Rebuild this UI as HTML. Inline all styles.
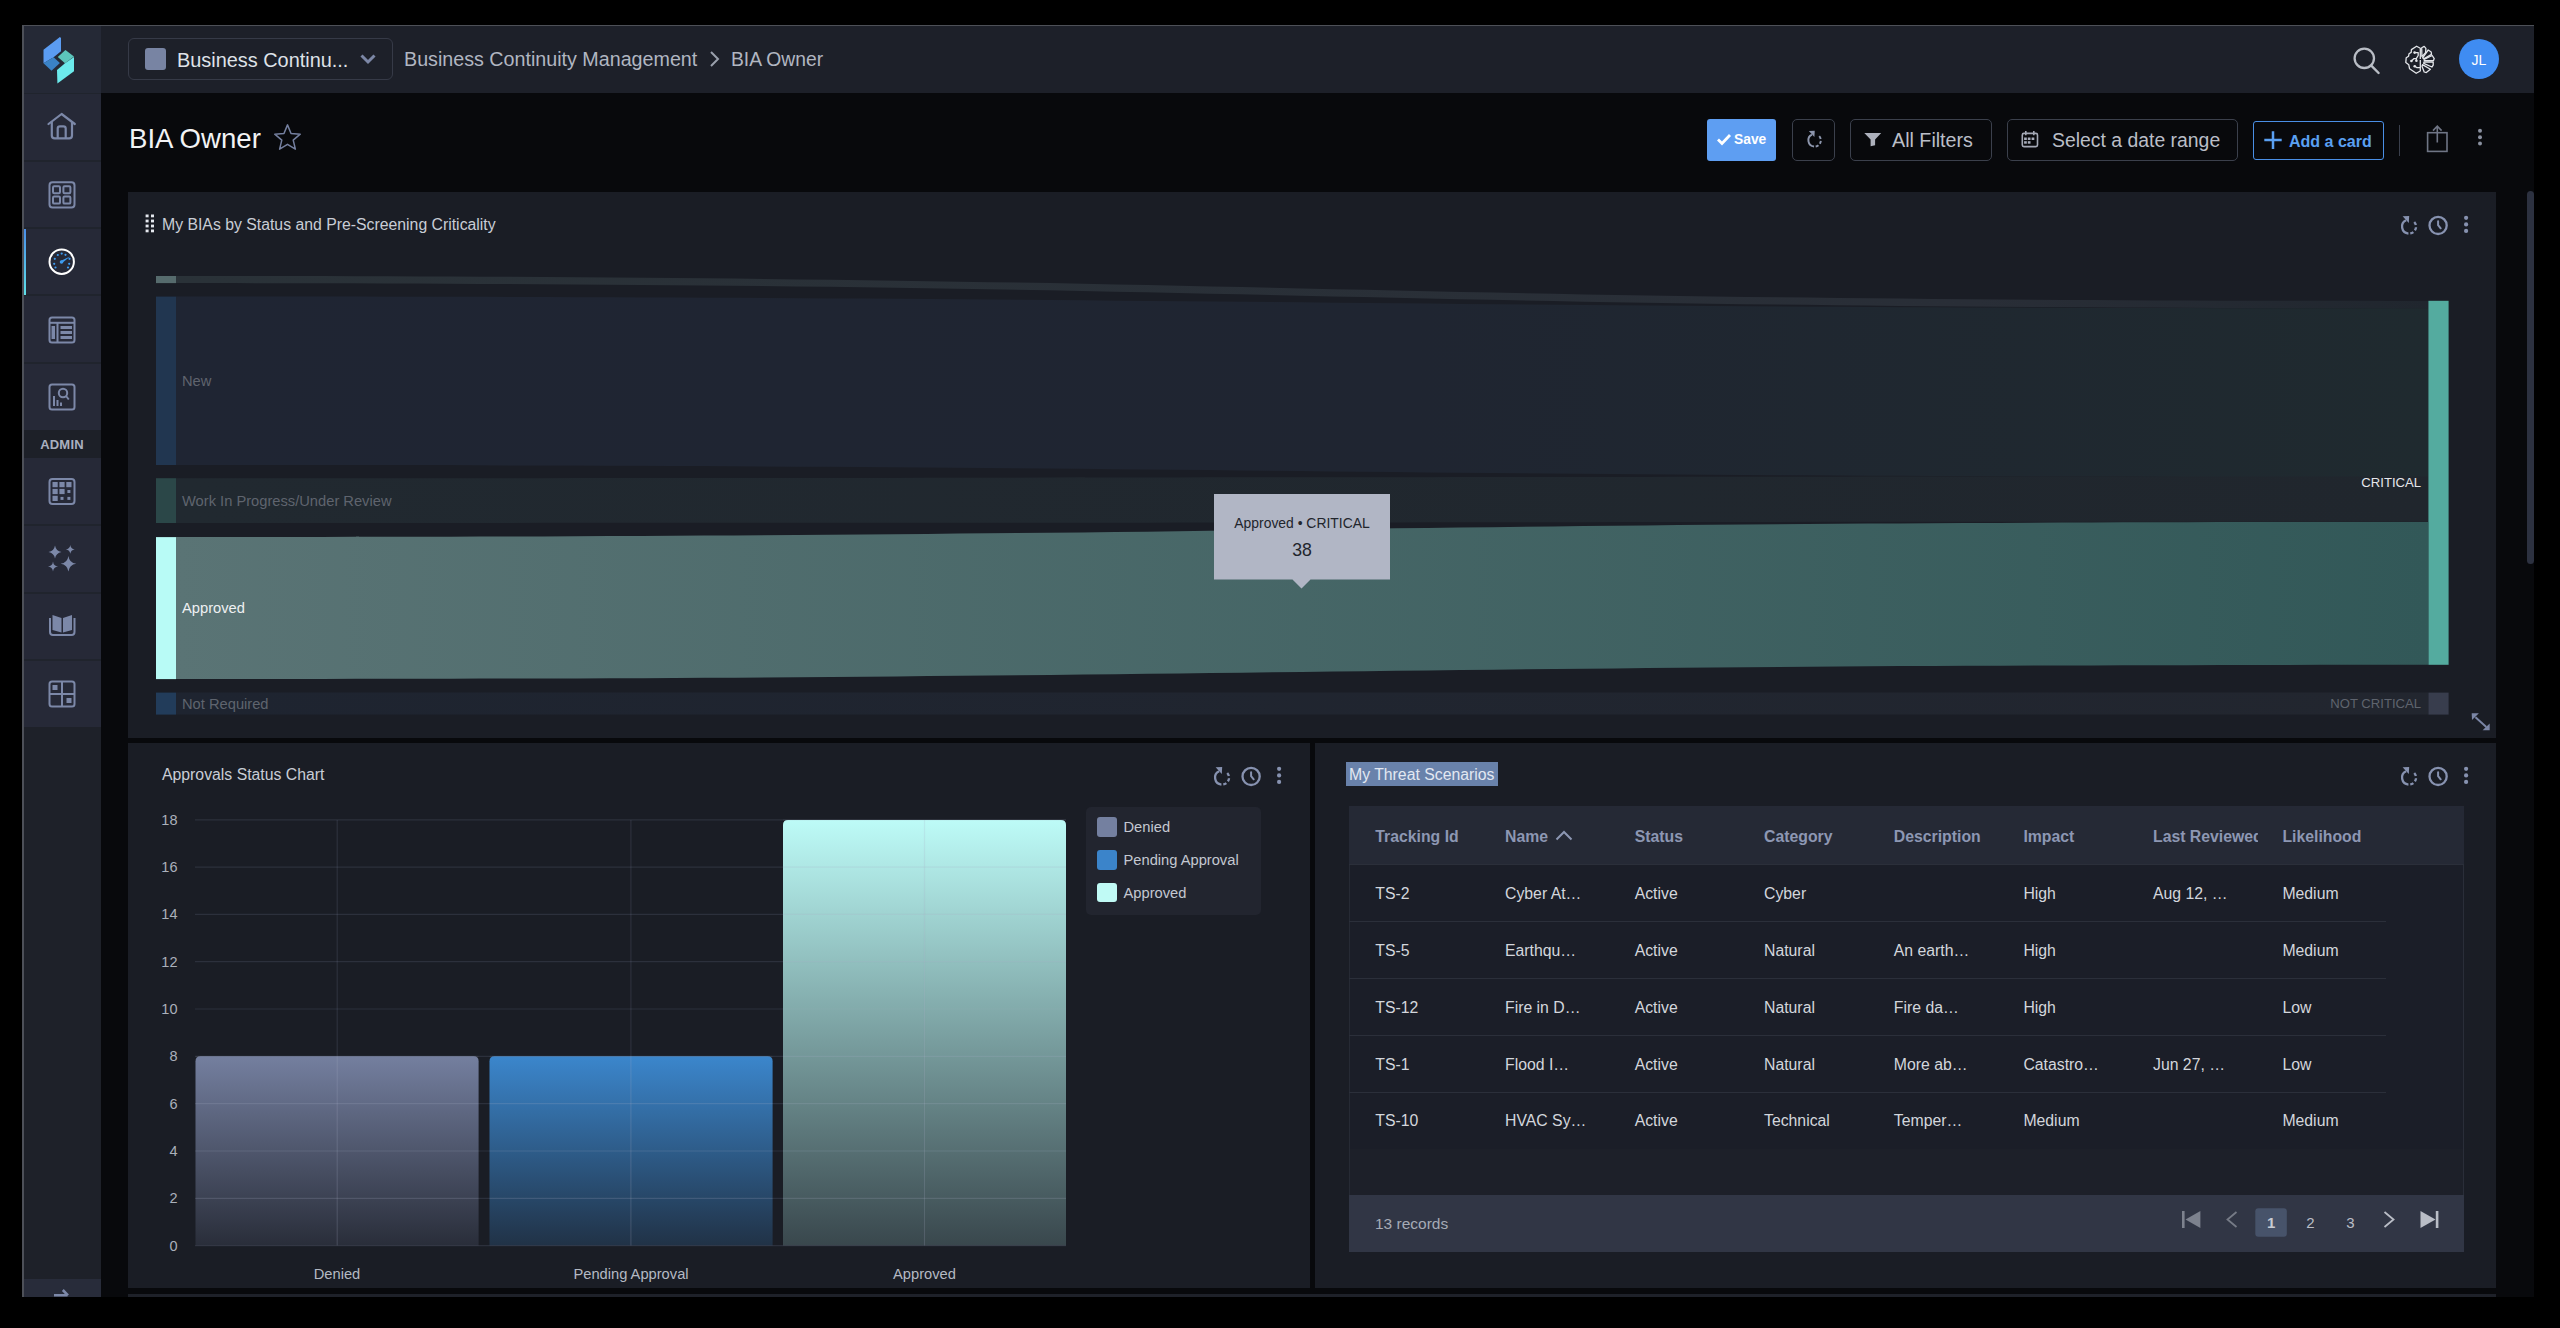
<!DOCTYPE html>
<html><head><meta charset="utf-8">
<style>
*{box-sizing:border-box;margin:0;padding:0}
html,body{width:2560px;height:1328px;overflow:hidden;background:#000;font-family:"Liberation Sans",sans-serif}
.a{position:absolute}
.t{position:absolute;white-space:nowrap;line-height:1}
#win{left:22px;top:25px;width:2512px;height:1272px;background:#08090c;overflow:hidden}
#wbt{left:22px;top:25px;width:2512px;height:1px;background:#4d5057}
#wbl{left:22px;top:25px;width:2px;height:1272px;background:#4d5058}
.sb{left:23px;width:78px;background:#262937}
.sep{left:23px;width:78px;height:2px;background:#20242d}
.ic{position:absolute}
.panel{background:#1a1d25}
</style></head><body>
<div id="win" class="a"></div>
<!-- sidebar -->
<div class="a sb" style="top:26px;height:67px;background:#252936"></div>
<div class="a" style="left:23px;top:92.8px;width:78px;height:1.5px;background:#20242d"></div>
<div class="a sb" style="top:94.3px;height:632.7px"></div>
<div class="a" style="left:23px;top:727px;width:78px;height:552px;background:#1e2129"></div>
<div class="a" style="left:23px;top:1279px;width:78px;height:18px;background:#282c3a"></div>
<div class="a sep" style="top:160px"></div>
<div class="a sep" style="top:227px"></div>
<div class="a sep" style="top:294px"></div>
<div class="a sep" style="top:362px"></div>
<div class="a" style="left:23px;top:430px;width:78px;height:28px;background:#1d2028"></div>
<div class="t" style="left:23px;width:78px;top:438px;text-align:center;font-size:13px;font-weight:bold;color:#aab0c0;letter-spacing:0.2px">ADMIN</div>
<div class="a sep" style="top:524px"></div>
<div class="a sep" style="top:592px"></div>
<div class="a sep" style="top:659px"></div>
<div class="a" style="left:22px;top:229px;width:4px;height:66px;background:linear-gradient(#4a8fe8,#5ee0e8)"></div>
<div id="wbt" class="a"></div>
<div id="wbl" class="a"></div>
<!-- logo -->
<svg class="ic" style="left:40px;top:34px" width="38" height="52" viewBox="40 34 38 52">
<polygon points="43.5,49.7 59.9,37.1 61,38 61,51.2 53.6,57.3 43.5,63.2" fill="#5b9cf2"/>
<polygon points="43.5,63.2 53.6,57.3 59.9,63 51.5,70.8" fill="#3a82c6"/>
<polygon points="57.8,56.9 65.4,50.1 74,56.5 65,63.2" fill="#5cc5bb"/>
<polygon points="57,70 65,63.2 74,56.9 74,71.2 57.4,83.5" fill="#6ceaec"/>
</svg>
<!-- sidebar icons -->
<svg class="ic" style="left:45px;top:110px" width="34" height="32" viewBox="45 110 34 32" fill="none" stroke="#7c88a8" stroke-width="2.2" stroke-linejoin="round" stroke-linecap="round">
<path d="M48.5,124 L61.6,114 L74.8,124"/><path d="M51.8,122 V135.5 Q51.8,138.4 54.7,138.4 H69.2 Q72,138.4 72,135.5 V122"/><path d="M57.7,138 V128.5 Q57.7,126.3 60,126.3 H63.4 Q65.7,126.3 65.7,128.5 V138"/>
</svg>
<svg class="ic" style="left:45px;top:178px" width="34" height="34" viewBox="45 178 34 34" fill="none" stroke="#7c88a8" stroke-width="2">
<rect x="49.5" y="182.2" width="25" height="25.4" rx="3"/>
<rect x="53" y="186.3" width="7" height="7" rx="1.2"/><rect x="63.4" y="186.3" width="7" height="7" rx="1.2"/>
<rect x="53" y="196.6" width="7" height="7" rx="1.2"/><rect x="63.4" y="196.6" width="7" height="7" rx="1.2"/>
</svg>
<svg class="ic" style="left:45px;top:245px" width="34" height="34" viewBox="45 245 34 34">
<circle cx="61.7" cy="261.7" r="12.2" fill="none" stroke="#fff" stroke-width="2"/>
<g fill="#3e9bef">
<circle cx="54.2" cy="263.8" r="1.1"/><circle cx="54.8" cy="258.8" r="1.1"/><circle cx="57.8" cy="255" r="1.1"/><circle cx="61.7" cy="253.6" r="1.1"/><circle cx="65.5" cy="254.8" r="1.1"/><circle cx="69.2" cy="263.8" r="1.1"/><circle cx="69.5" cy="258.8" r="1.1"/><circle cx="55.5" cy="267.5" r="1.1"/><circle cx="68" cy="267.5" r="1.1"/>
<circle cx="61.5" cy="262" r="1.8"/>
<polygon points="60.5,261 62.2,263 70,256.5"/>
</g>
</svg>
<svg class="ic" style="left:45px;top:313px" width="34" height="34" viewBox="45 313 34 34" fill="none" stroke="#7c88a8" stroke-width="2">
<rect x="49.5" y="317.5" width="25" height="25" rx="2.5"/><path d="M49.5,322.8 H74.5"/><path d="M57.5,323 V342"/>
<g fill="#7c88a8" stroke="none"><rect x="51.5" y="326" width="3.5" height="13"/><rect x="60.5" y="326" width="11.5" height="3"/><rect x="60.5" y="331" width="11.5" height="3"/><rect x="60.5" y="336" width="11.5" height="3"/></g>
</svg>
<svg class="ic" style="left:45px;top:380px" width="34" height="34" viewBox="45 380 34 34" fill="none" stroke="#7c88a8" stroke-width="2">
<rect x="49.5" y="384.5" width="25" height="25" rx="2.5"/><circle cx="63" cy="393" r="4.2"/><path d="M66,396 L68.8,399.5"/>
<g fill="#7c88a8" stroke="none"><rect x="53" y="396" width="2" height="10"/><rect x="56.5" y="400" width="2" height="6"/><rect x="60" y="402.5" width="2" height="3.5"/></g>
</svg>
<svg class="ic" style="left:45px;top:475px" width="34" height="34" viewBox="45 475 34 34">
<rect x="49.5" y="479" width="25" height="25" rx="3" fill="none" stroke="#7c88a8" stroke-width="2"/>
<g fill="#7c88a8"><rect x="52.5" y="482" width="5.2" height="5.2"/><rect x="59.4" y="482" width="5.2" height="5.2"/><rect x="66.3" y="482" width="5.2" height="5.2"/>
<rect x="52.5" y="488.9" width="5.2" height="5.2"/><rect x="59.4" y="488.9" width="5.2" height="5.2"/><rect x="67.4" y="490" width="3" height="3"/>
<rect x="52.5" y="495.8" width="5.2" height="5.2"/><rect x="60.5" y="496.9" width="3" height="3"/><rect x="67.4" y="496.9" width="3" height="3"/></g>
</svg>
<svg class="ic" style="left:45px;top:543px" width="34" height="34" viewBox="45 543 34 34" fill="#7c88a8">
<path d="M55,545.5 Q56,551 61.5,552 Q56,553 55,558.5 Q54,553 48.5,552 Q54,551 55,545.5Z"/>
<path d="M70.3,545 Q70.8,548.9 74.7,549.4 Q70.8,549.9 70.3,553.8 Q69.8,549.9 65.9,549.4 Q69.8,548.9 70.3,545Z"/>
<path d="M68.4,556 Q69.3,562.9 76.2,563.8 Q69.3,564.7 68.4,571.6 Q67.5,564.7 60.6,563.8 Q67.5,562.9 68.4,556Z"/>
<path d="M53,561.6 Q53.5,566.1 58,566.6 Q53.5,567.1 53,571.6 Q52.5,567.1 48,566.6 Q52.5,566.1 53,561.6Z"/>
</svg>
<svg class="ic" style="left:45px;top:608px" width="34" height="34" viewBox="45 608 34 34">
<path d="M50,618 V632 Q50,635 53,635 H71.5 Q74.5,635 74.5,632 V618" fill="none" stroke="#7c88a8" stroke-width="2"/>
<path d="M52.5,615 L61.5,618 V632.5 L52.5,630Z" fill="#7c88a8"/><path d="M72,615 L63,618 V632.5 L72,630Z" fill="#7c88a8"/>
</svg>
<svg class="ic" style="left:45px;top:677px" width="34" height="34" viewBox="45 677 34 34" fill="none" stroke="#7c88a8" stroke-width="2">
<rect x="49.5" y="681.5" width="25" height="25" rx="2.5"/><path d="M62,681.5 V706.5 M49.5,694 H74.5"/>
<g fill="#7c88a8" stroke="none"><rect x="52.5" y="685" width="5" height="5"/><rect x="66.5" y="698" width="5" height="5"/></g>
</svg>
<svg class="ic" style="left:52px;top:1286px" width="20" height="11" viewBox="52 1286 20 11">
<path d="M54,1295.3 H67.5 M62.8,1290 L68,1295.3" fill="none" stroke="#7c88a8" stroke-width="2.6"/>
</svg>

<!-- header -->
<div class="a" style="left:101px;top:26px;width:2433px;height:67px;background:#1d2029"></div>
<div class="a" style="left:128px;top:38px;width:265px;height:42px;border:1px solid #363a47;border-radius:6px"></div>
<div class="a" style="left:145px;top:48px;width:21px;height:22px;background:#7884a3;border-radius:3px"></div>
<div class="t" id="dd" style="left:177px;top:50.8px;font-size:19.9px;color:#dfe2e8">Business Continu...</div>
<svg class="ic" style="left:358px;top:51px" width="20" height="16" viewBox="0 0 20 16"><path d="M3.5,4.5 L10,11 L16.5,4.5" fill="none" stroke="#7c87a6" stroke-width="3"/></svg>
<div class="t" id="bc1" style="left:404px;top:50px;font-size:19.7px;color:#b1b6c1">Business Continuity Management</div>
<svg class="ic" style="left:706px;top:48px" width="16" height="22" viewBox="0 0 16 22"><path d="M5,4 L12,11 L5,18" fill="none" stroke="#9aa0ac" stroke-width="2"/></svg>
<div class="t" id="bc2" style="left:731px;top:50px;font-size:19.3px;color:#b1b6c1">BIA Owner</div>
<svg class="ic" style="left:2350px;top:44px" width="34" height="34" viewBox="2350 44 34 34"><circle cx="2364.3" cy="58.3" r="9.7" fill="none" stroke="#b9bdc5" stroke-width="2.3"/><path d="M2371.3,65.6 L2378.6,73" stroke="#b9bdc5" stroke-width="2.4" stroke-linecap="round"/></svg>
<svg class="ic" style="left:2402px;top:43px" width="36" height="34" viewBox="2402 43 36 34" fill="none" stroke="#e4e6ea" stroke-width="1.3" stroke-linejoin="round">
<path d="M2420.3,59 V48.3 L2416.6,46.2 L2411.4,49.6 L2411.2,52.4 L2409,53.8 L2408.6,56.2 L2406.2,57.8 L2405.8,62.6 L2408.8,64.8 L2409.6,68.8 L2416.2,73.3 L2420.3,71 V60"/>
<path d="M2414.6,52.6 H2418.2 V55.5 L2416.4,58.3 V60.8"/><path d="M2411.4,61 L2414,58.6 H2416.4"/><path d="M2414.7,66.2 L2417,67.6 H2420.3"/>
<g fill="#e4e6ea" stroke="none"><circle cx="2414.6" cy="52.6" r="1.3"/><circle cx="2411.4" cy="61" r="1.3"/><circle cx="2416.4" cy="60.8" r="1.3"/><circle cx="2414.7" cy="66.2" r="1.3"/></g>
<path d="M2421.9,56.6 L2421.7,47.8 L2424.2,46.4 L2425.9,48.4 L2425.6,52.6 Z"/>
<path d="M2422.6,57.8 L2428.2,50 L2431.2,52 L2431.5,54.4 L2424.3,58.6 Z"/>
<path d="M2424,59.4 L2432.2,55.5 L2434.2,58.6 L2433.5,60.5 L2424.3,60.6 Z"/>
<path d="M2424,61.8 L2433.2,62 L2433.2,65.2 L2431.9,67 L2423.7,63.4 Z"/>
<path d="M2422.5,64.6 L2430.4,69.2 L2426.3,72.6 L2424.2,72 L2422,66.2 Z"/>
</svg>
<div class="a" style="left:2459px;top:39px;width:40px;height:40px;border-radius:50%;background:#3f8cf2"></div>
<div class="t" style="left:2459px;width:40px;top:53px;text-align:center;font-size:14px;color:#fff">JL</div>

<!-- title row -->
<div class="t" id="title" style="left:129px;top:124.5px;font-size:27.6px;color:#f2f3f5">BIA Owner</div>
<svg class="ic" style="left:270px;top:120px" width="36" height="36" viewBox="270 120 36 36"><polygon points="287.50,124.90 291.03,133.45 300.24,134.16 293.21,140.15 295.38,149.14 287.50,144.30 279.62,149.14 281.79,140.15 274.76,134.16 283.97,133.45" fill="none" stroke="#7580a0" stroke-width="1.5" stroke-linejoin="round"/></svg>

<div class="a" style="left:1707px;top:119px;width:69px;height:42px;background:#5e9ef2;border-radius:3px"></div>
<svg class="ic" style="left:1716px;top:132px" width="16" height="14" viewBox="0 0 16 14"><path d="M2,7.5 L6,11.5 L14,3" fill="none" stroke="#fff" stroke-width="2.8"/></svg>
<div class="t" id="save" style="left:1734px;top:133px;font-size:13.8px;font-weight:bold;color:#fff">Save</div>

<div class="a" style="left:1792px;top:119px;width:43px;height:42px;border:1px solid #3b404c;border-radius:5px"></div>
<svg class="ic" style="left:1802px;top:128px" width="26" height="24" viewBox="1802 128 26 24"><g transform="translate(1814.6,140.3) scale(0.89) translate(-2409.05,-226.6)">
<path d="M2406.09,220.26 A7,7 0 0 0 2408.44,233.57" fill="none" stroke="#8d96ad" stroke-width="2.2"/>
<path d="M2410.27,233.49 A7,7 0 0 0 2412.55,220.54" fill="none" stroke="#8d96ad" stroke-width="2.2" stroke-dasharray="3.4 2.2"/>
<polygon points="2402.6,216.2 2409.2,216 2408.8,222.9" fill="#8d96ad"/></g></svg>

<div class="a" style="left:1850px;top:119px;width:142px;height:42px;border:1px solid #3b404c;border-radius:5px"></div>
<svg class="ic" style="left:1860px;top:128px" width="26" height="22" viewBox="1860 128 26 22"><path d="M1864.3,132.9 H1881.2 L1875.1,139.6 V145.3 L1870.6,146.2 V139.6Z" fill="#adb1bc"/></svg>
<div class="t" id="allf" style="left:1892px;top:131px;font-size:19.7px;color:#babec7">All Filters</div>

<div class="a" style="left:2007px;top:119px;width:231px;height:42px;border:1px solid #3b404c;border-radius:5px"></div>
<svg class="ic" style="left:2016px;top:126px" width="28" height="26" viewBox="2016 126 28 26"><rect x="2022.3" y="133.4" width="15.2" height="13.2" rx="1.6" fill="none" stroke="#a3a8b5" stroke-width="1.6"/><path d="M2025.8,131 V135.2 M2033.8,131 V135.2" stroke="#a3a8b5" stroke-width="1.6"/><g fill="#a8adbb"><rect x="2024.1" y="137.5" width="2.7" height="2.5"/><rect x="2027.8" y="137.5" width="2.7" height="2.5"/><rect x="2031.6" y="137.5" width="2.7" height="2.5"/><rect x="2024.1" y="141.2" width="2.7" height="2.5"/><rect x="2027.8" y="141.2" width="2.7" height="2.5"/></g></svg>
<div class="t" id="date" style="left:2052px;top:131px;font-size:19.4px;color:#babec7">Select a date range</div>

<div class="a" style="left:2253px;top:121px;width:131px;height:39px;border:1.5px solid #4a8fe6;border-radius:3px"></div>
<svg class="ic" style="left:2262.5px;top:129.7px" width="20" height="20" viewBox="0 0 20 20"><path d="M10,1.2 V18.9 M1.3,10 H18.7" stroke="#5aa0f2" stroke-width="2.5"/></svg>
<div class="t" id="addc" style="left:2289px;top:134px;font-size:16px;font-weight:bold;color:#5aa0f2">Add a card</div>
<div class="a" style="left:2399px;top:125px;width:1px;height:31px;background:#3a3f4c"></div>
<svg class="ic" style="left:2420px;top:120px" width="34" height="36" viewBox="2420 120 34 36" fill="none" stroke="#6f7585" stroke-width="1.6"><rect x="2427.6" y="132.7" width="19.4" height="18.7"/><path d="M2437.3,142.5 V126.5 M2433,130.6 L2437.3,126.2 L2441.6,130.6"/></svg>
<svg class="ic" style="left:2475px;top:126px" width="10" height="24" viewBox="0 0 10 24" fill="#8a90a0"><circle cx="5" cy="4.8" r="2"/><circle cx="5" cy="11.2" r="2"/><circle cx="5" cy="17.5" r="2"/></svg>
<!-- panel 1 -->
<div class="a panel" style="left:128px;top:192px;width:2368px;height:545.5px"></div>
<svg class="ic" style="left:144px;top:213px" width="12" height="21" viewBox="144 213 12 21" fill="#e4e7ee">
<rect x="145.6" y="214.5" width="3" height="2.8"/><rect x="151" y="214.5" width="3" height="2.8"/>
<rect x="145.6" y="219.6" width="3" height="2.8"/><rect x="151" y="219.6" width="3" height="2.8"/>
<rect x="145.6" y="224.6" width="3" height="2.8"/><rect x="151" y="224.6" width="3" height="2.8"/>
<rect x="145.6" y="229.5" width="3" height="2.8"/><rect x="151" y="229.5" width="3" height="2.8"/>
</svg>
<div class="t" id="p1t" style="left:162px;top:217px;font-size:15.8px;color:#c9cdd6">My BIAs by Status and Pre-Screening Criticality</div>
<svg class="ic" style="left:2395px;top:210px" width="80" height="30" viewBox="2395 210 80 30">
<path d="M2406.09,220.26 A7,7 0 0 0 2408.44,233.57" fill="none" stroke="#8792b0" stroke-width="2.3"/>
<path d="M2410.27,233.49 A7,7 0 0 0 2412.55,220.54" fill="none" stroke="#8792b0" stroke-width="2.3" stroke-dasharray="3.4 2.2"/>
<polygon points="2402.6,216.2 2409.2,216 2408.8,222.9" fill="#8792b0"/>
<circle cx="2438.1" cy="225.4" r="8.6" fill="none" stroke="#8792b0" stroke-width="2.3"/>
<path d="M2438.1,221.2 V225.2 L2440.7,228.3" fill="none" stroke="#8792b0" stroke-width="2" stroke-linecap="round"/>
<circle cx="2466.1" cy="217.8" r="2.1" fill="#8792b0"/><circle cx="2466.1" cy="224.4" r="2.1" fill="#8792b0"/><circle cx="2466.1" cy="230.9" r="2.1" fill="#8792b0"/>
</svg>
<svg class="ic" style="left:128px;top:192px" width="2368" height="545" viewBox="128 192 2368 545">
<defs>
<linearGradient id="gS" x1="0" x2="1"><stop offset="0" stop-color="#2a3238"/><stop offset="0.8" stop-color="#292e37"/><stop offset="1" stop-color="#20262e"/></linearGradient>
<linearGradient id="gN" x1="0" x2="1"><stop offset="0" stop-color="#1f2533"/><stop offset="0.55" stop-color="#1f2531"/><stop offset="1" stop-color="#1f2a2f"/></linearGradient>
<linearGradient id="gW" x1="0" x2="1"><stop offset="0" stop-color="#212930"/><stop offset="1" stop-color="#20262d"/></linearGradient>
<linearGradient id="gA" x1="0" x2="1"><stop offset="0" stop-color="#5a7475"/><stop offset="1" stop-color="#325858"/></linearGradient>
<linearGradient id="gR" x1="0" x2="1"><stop offset="0" stop-color="#1e2430"/><stop offset="1" stop-color="#22262f"/></linearGradient>
</defs>
<path d="M176,276 C1302,276 1302,301 2428,301 L2428,308.2 C1302,308.2 1302,283.1 176,283.1Z" fill="url(#gS)"/>
<path d="M176,296.6 C1302,296.6 1302,308.2 2428,308.2 L2428,477 C1302,477 1302,465 176,465Z" fill="url(#gN)"/>
<path d="M176,478.2 C1302,478.2 1302,476.4 2428,476.4 L2428,521.8 C1302,521.8 1302,523 176,523Z" fill="url(#gW)"/>
<path d="M176,537.1 C1302,537.1 1302,522 2428,522 L2428,664.8 C1302,664.8 1302,679.1 176,679.1Z" fill="url(#gA)"/>
<path d="M176,692.6 H2428 V714.6 H176Z" fill="url(#gR)"/>
<rect x="156" y="276" width="20" height="7.1" fill="#566b6d"/>
<rect x="156" y="296.6" width="20" height="168.4" fill="#213650"/>
<rect x="156" y="478.2" width="20" height="44.8" fill="#2b4748"/>
<rect x="156" y="537.1" width="20" height="142" fill="#b8fbf6"/>
<rect x="156" y="692.6" width="20" height="22" fill="#223c5a"/>
<rect x="2428.4" y="300.8" width="20.2" height="364" fill="#54ab9f"/>
<rect x="2428.4" y="692.6" width="20.2" height="22" fill="#383d4d"/>
<path d="M2475.5,717.2 L2486.3,727" fill="none" stroke="#7b86a6" stroke-width="1.9"/><polygon points="2471.7,713.3 2478.9,713.3 2472,720" fill="#7b86a6"/><polygon points="2489.7,723.6 2489.7,730.2 2482.6,730.2" fill="#7b86a6"/>
</svg>
<div class="t" id="lNew" style="left:182px;top:374px;font-size:14.7px;color:#5f646e">New</div>
<div class="t" id="lWip" style="left:182px;top:494px;font-size:14.7px;color:#5f646e">Work In Progress/Under Review</div>
<div class="t" id="lApp" style="left:182px;top:601px;font-size:14.7px;color:#eef0f2">Approved</div>
<div class="t" id="lNR" style="left:182px;top:697px;font-size:14.7px;color:#5f646e">Not Required</div>
<div class="t" id="lCr" style="right:139px;top:476px;font-size:13.1px;color:#e6e8ec">CRITICAL</div>
<div class="t" id="lNC" style="right:139px;top:697px;font-size:13.1px;color:#5f646e">NOT CRITICAL</div>
<!-- tooltip -->
<svg class="ic" style="left:1214px;top:494px" width="176" height="96" viewBox="1214 494 176 96"><path d="M1214,494 H1390 V579.6 H1310.5 L1301.5,588.6 L1292.5,579.6 H1214Z" fill="#b1b6c5"/></svg>
<div class="t" id="ttt" style="left:1214px;width:176px;text-align:center;top:517px;font-size:13.9px;color:#22252c">Approved &#8226; CRITICAL</div>
<div class="t" id="tt38" style="left:1214px;width:176px;text-align:center;top:542px;font-size:17.7px;color:#22252c">38</div>
<!-- panel 2 -->
<div class="a panel" style="left:128px;top:743px;width:1182px;height:545px"></div>
<div class="t" id="p2t" style="left:162px;top:767px;font-size:15.8px;color:#c9cdd6">Approvals Status Chart</div>
<svg class="ic" style="left:1208px;top:760.5px" width="80" height="30" viewBox="2395 210 80 30">
<path d="M2406.09,220.26 A7,7 0 0 0 2408.44,233.57" fill="none" stroke="#8792b0" stroke-width="2.3"/>
<path d="M2410.27,233.49 A7,7 0 0 0 2412.55,220.54" fill="none" stroke="#8792b0" stroke-width="2.3" stroke-dasharray="3.4 2.2"/>
<polygon points="2402.6,216.2 2409.2,216 2408.8,222.9" fill="#8792b0"/>
<circle cx="2438.1" cy="225.4" r="8.6" fill="none" stroke="#8792b0" stroke-width="2.3"/>
<path d="M2438.1,221.2 V225.2 L2440.7,228.3" fill="none" stroke="#8792b0" stroke-width="2" stroke-linecap="round"/>
<circle cx="2466.1" cy="217.8" r="2.1" fill="#8792b0"/><circle cx="2466.1" cy="224.4" r="2.1" fill="#8792b0"/><circle cx="2466.1" cy="230.9" r="2.1" fill="#8792b0"/>
</svg>
<svg class="ic" style="left:128px;top:743px" width="1182" height="545" viewBox="128 743 1182 545">

<defs>
<linearGradient id="bD" x1="0" y1="0" x2="0" y2="1"><stop offset="0" stop-color="#747f9f"/><stop offset="1" stop-color="#747f9f" stop-opacity="0.17"/></linearGradient>
<linearGradient id="bP" x1="0" y1="0" x2="0" y2="1"><stop offset="0" stop-color="#3b86cc"/><stop offset="1" stop-color="#3b86cc" stop-opacity="0.2"/></linearGradient>
<linearGradient id="bA" x1="0" y1="0" x2="0" y2="1"><stop offset="0" stop-color="#bdfbf7"/><stop offset="1" stop-color="#bdfbf7" stop-opacity="0.19"/></linearGradient>
</defs>
<path d="M195.5,1245.6 V1061.2 Q195.5,1056.2 200.5,1056.2 H473.6 Q478.6,1056.2 478.6,1061.2 V1245.6Z" fill="url(#bD)"/>
<path d="M489.5,1245.6 V1061.2 Q489.5,1056.2 494.5,1056.2 H767.6 Q772.6,1056.2 772.6,1061.2 V1245.6Z" fill="url(#bP)"/>
<path d="M783,1245.6 V825 Q783,820 788,820 H1061 Q1066,820 1066,825 V1245.6Z" fill="url(#bA)"/>

<g stroke="#8c96b4" stroke-opacity="0.16" stroke-width="1.2" fill="none"><path d="M195,1245.6 H1066" /><path d="M195,1198.3 H1066" /><path d="M195,1151.0 H1066" /><path d="M195,1103.7 H1066" /><path d="M195,1056.4 H1066" /><path d="M195,1009.0 H1066" /><path d="M195,961.7 H1066" /><path d="M195,914.4 H1066" /><path d="M195,867.1 H1066" /><path d="M195,819.8 H1066" /><path d="M337.2,820 V1245.6" /><path d="M630.9,820 V1245.6" /><path d="M924.5,820 V1245.6" /></g><g stroke="#ffffff" stroke-opacity="0.05" stroke-width="1.2" fill="none"><path d="M195.5,1198.3 H478.6 M489.5,1198.3 H772.6 M783,1198.3 H1066"/><path d="M195.5,1151.0 H478.6 M489.5,1151.0 H772.6 M783,1151.0 H1066"/><path d="M195.5,1103.7 H478.6 M489.5,1103.7 H772.6 M783,1103.7 H1066"/><path d="M195.5,1056.4 H478.6 M489.5,1056.4 H772.6 M783,1056.4 H1066"/><path d="M783,1009.0 H1066"/><path d="M783,961.7 H1066"/><path d="M783,914.4 H1066"/><path d="M783,867.1 H1066"/><path d="M783,819.8 H1066"/><path d="M337.2,1056.2 V1245.6 M630.9,1056.2 V1245.6 M924.5,820 V1245.6"/></g>
</svg>
<style>.ylab{left:140px;width:37.5px;text-align:right;font-size:14.5px;color:#aab0bb}</style>
<div class="t ylab" style="top:1238.6px">0</div><div class="t ylab" style="top:1191.3px">2</div><div class="t ylab" style="top:1144.0px">4</div><div class="t ylab" style="top:1096.7px">6</div><div class="t ylab" style="top:1049.4px">8</div><div class="t ylab" style="top:1002.0px">10</div><div class="t ylab" style="top:954.7px">12</div><div class="t ylab" style="top:907.4px">14</div><div class="t ylab" style="top:860.1px">16</div><div class="t ylab" style="top:812.8px">18</div>
<div class="t" id="xD" style="left:237px;width:200px;text-align:center;top:1267px;font-size:14.7px;color:#b4b9c3">Denied</div>
<div class="t" id="xP" style="left:531px;width:200px;text-align:center;top:1267px;font-size:14.7px;color:#b4b9c3">Pending Approval</div>
<div class="t" id="xA" style="left:824.5px;width:200px;text-align:center;top:1267px;font-size:14.7px;color:#b4b9c3">Approved</div>
<div class="a" style="left:1086px;top:807px;width:175px;height:108px;background:#22252f;border-radius:5px"></div>
<div class="a" style="left:1097px;top:817px;width:20px;height:19.5px;background:#7480a0;border-radius:3px"></div>
<div class="a" style="left:1097px;top:850px;width:20px;height:19.5px;background:#3b84ca;border-radius:3px"></div>
<div class="a" style="left:1097px;top:882.5px;width:20px;height:19.5px;background:#c0faf5;border-radius:3px"></div>
<div class="t" id="lgD" style="left:1123.5px;top:820px;font-size:14.7px;color:#c4c8d1">Denied</div>
<div class="t" id="lgP" style="left:1123.5px;top:853px;font-size:14.7px;color:#c4c8d1">Pending Approval</div>
<div class="t" id="lgA" style="left:1123.5px;top:886px;font-size:14.7px;color:#c4c8d1">Approved</div>
<!-- panel 3 -->
<div class="a panel" style="left:1315px;top:743px;width:1181px;height:545px"></div>
<div class="a" style="left:1346px;top:762.3px;width:152px;height:24px;background:#6982ab"></div>
<div class="t" id="p3t" style="left:1349px;top:767px;font-size:15.8px;color:#e2e8f2">My Threat Scenarios</div>
<svg class="ic" style="left:2395px;top:760.5px" width="80" height="30" viewBox="2395 210 80 30">
<path d="M2406.09,220.26 A7,7 0 0 0 2408.44,233.57" fill="none" stroke="#8792b0" stroke-width="2.3"/>
<path d="M2410.27,233.49 A7,7 0 0 0 2412.55,220.54" fill="none" stroke="#8792b0" stroke-width="2.3" stroke-dasharray="3.4 2.2"/>
<polygon points="2402.6,216.2 2409.2,216 2408.8,222.9" fill="#8792b0"/>
<circle cx="2438.1" cy="225.4" r="8.6" fill="none" stroke="#8792b0" stroke-width="2.3"/>
<path d="M2438.1,221.2 V225.2 L2440.7,228.3" fill="none" stroke="#8792b0" stroke-width="2" stroke-linecap="round"/>
<circle cx="2466.1" cy="217.8" r="2.1" fill="#8792b0"/><circle cx="2466.1" cy="224.4" r="2.1" fill="#8792b0"/><circle cx="2466.1" cy="230.9" r="2.1" fill="#8792b0"/>
</svg>
<div class="a" style="left:1348.5px;top:806.3px;width:1115px;height:58px;background:#252935"></div>
<div class="a" style="left:1348.5px;top:864px;width:1115px;height:331px;background:#1b1e28"></div>
<div class="a" style="left:1348.5px;top:864px;width:1px;height:331px;background:#262a34"></div>
<div class="a" style="left:2462.5px;top:864px;width:1px;height:331px;background:#2a2e39"></div>
<div class="a" style="left:1348.5px;top:864px;width:1115px;height:1.3px;background:#2b2f3a"></div>
<style>.th{top:829px;font-size:15.8px;font-weight:bold;color:#8d97b3} .td{font-size:15.8px;color:#d3d6dc}</style>
<div class="t th" id="h0" style="left:1375.3px;">Tracking Id</div><div class="t th" id="h1" style="left:1505px;">Name</div><div class="t th" id="h2" style="left:1634.7px;">Status</div><div class="t th" id="h3" style="left:1764px;">Category</div><div class="t th" id="h4" style="left:1893.8px;">Description</div><div class="t th" id="h5" style="left:2023.4px;">Impact</div><div class="t th" id="h6" style="left:2153px;width:105px;overflow:hidden;">Last Reviewed</div><div class="t th" id="h7" style="left:2282.4px;">Likelihood</div><svg class="ic" style="left:1554px;top:828px" width="20" height="14" viewBox="0 0 20 14"><path d="M2.5,11.5 L10,4 L17.5,11.5" fill="none" stroke="#8d97b3" stroke-width="2"/></svg>
<div class="t td" id="r0c0" style="left:1375.3px;top:885.7px">TS-2</div><div class="t td" id="r0c1" style="left:1505px;top:885.7px">Cyber At&#8230;</div><div class="t td" id="r0c2" style="left:1634.7px;top:885.7px">Active</div><div class="t td" id="r0c3" style="left:1764px;top:885.7px">Cyber</div><div class="t td" id="r0c5" style="left:2023.4px;top:885.7px">High</div><div class="t td" id="r0c6" style="left:2153px;top:885.7px">Aug 12, &#8230;</div><div class="t td" id="r0c7" style="left:2282.4px;top:885.7px">Medium</div><div class="a" style="left:1349px;top:920.7px;width:1037px;height:1.3px;background:#2b2f3a"></div><div class="t td" id="r1c0" style="left:1375.3px;top:942.7px">TS-5</div><div class="t td" id="r1c1" style="left:1505px;top:942.7px">Earthqu&#8230;</div><div class="t td" id="r1c2" style="left:1634.7px;top:942.7px">Active</div><div class="t td" id="r1c3" style="left:1764px;top:942.7px">Natural</div><div class="t td" id="r1c4" style="left:1893.8px;top:942.7px">An earth&#8230;</div><div class="t td" id="r1c5" style="left:2023.4px;top:942.7px">High</div><div class="t td" id="r1c7" style="left:2282.4px;top:942.7px">Medium</div><div class="a" style="left:1349px;top:977.7px;width:1037px;height:1.3px;background:#2b2f3a"></div><div class="t td" id="r2c0" style="left:1375.3px;top:999.7px">TS-12</div><div class="t td" id="r2c1" style="left:1505px;top:999.7px">Fire in D&#8230;</div><div class="t td" id="r2c2" style="left:1634.7px;top:999.7px">Active</div><div class="t td" id="r2c3" style="left:1764px;top:999.7px">Natural</div><div class="t td" id="r2c4" style="left:1893.8px;top:999.7px">Fire da&#8230;</div><div class="t td" id="r2c5" style="left:2023.4px;top:999.7px">High</div><div class="t td" id="r2c7" style="left:2282.4px;top:999.7px">Low</div><div class="a" style="left:1349px;top:1034.7px;width:1037px;height:1.3px;background:#2b2f3a"></div><div class="t td" id="r3c0" style="left:1375.3px;top:1056.7px">TS-1</div><div class="t td" id="r3c1" style="left:1505px;top:1056.7px">Flood I&#8230;</div><div class="t td" id="r3c2" style="left:1634.7px;top:1056.7px">Active</div><div class="t td" id="r3c3" style="left:1764px;top:1056.7px">Natural</div><div class="t td" id="r3c4" style="left:1893.8px;top:1056.7px">More ab&#8230;</div><div class="t td" id="r3c5" style="left:2023.4px;top:1056.7px">Catastro&#8230;</div><div class="t td" id="r3c6" style="left:2153px;top:1056.7px">Jun 27, &#8230;</div><div class="t td" id="r3c7" style="left:2282.4px;top:1056.7px">Low</div><div class="a" style="left:1349px;top:1091.7px;width:1037px;height:1.3px;background:#2b2f3a"></div><div class="t td" id="r4c0" style="left:1375.3px;top:1113.3px">TS-10</div><div class="t td" id="r4c1" style="left:1505px;top:1113.3px">HVAC Sy&#8230;</div><div class="t td" id="r4c2" style="left:1634.7px;top:1113.3px">Active</div><div class="t td" id="r4c3" style="left:1764px;top:1113.3px">Technical</div><div class="t td" id="r4c4" style="left:1893.8px;top:1113.3px">Temper&#8230;</div><div class="t td" id="r4c5" style="left:2023.4px;top:1113.3px">Medium</div><div class="t td" id="r4c7" style="left:2282.4px;top:1113.3px">Medium</div>
<div class="a" style="left:1349.5px;top:1148.5px;width:1113px;height:46.5px;background:#1d2029"></div>
<div class="a" style="left:1348.5px;top:1195px;width:1115px;height:56.5px;background:#313645"></div>
<div class="t" id="rec" style="left:1375px;top:1216px;font-size:15.5px;color:#a6abb6">13 records</div>
<svg class="ic" style="left:2170px;top:1200px" width="290" height="46" viewBox="2170 1200 290 46">
<rect x="2182" y="1211" width="2.6" height="17" fill="#7d828e"/><polygon points="2200.4,1211 2200.4,1228 2185.5,1219.5" fill="#7d828e"/>
<path d="M2236.5,1212 L2227.5,1219.5 L2236.5,1227" fill="none" stroke="#767b86" stroke-width="1.8"/>
<rect x="2255.3" y="1208.3" width="31.5" height="28.5" rx="3" fill="#47536a"/>
<path d="M2384.5,1212 L2393.5,1219.5 L2384.5,1227" fill="none" stroke="#b9bdc6" stroke-width="1.8"/>
<polygon points="2420.5,1211 2420.5,1228 2435.5,1219.5" fill="#b9bdc6"/><rect x="2435.8" y="1211" width="2.6" height="17" fill="#b9bdc6"/>
</svg>
<div class="t" style="left:2255.3px;width:31.5px;text-align:center;top:1215px;font-size:15px;font-weight:bold;color:#c7cbd3">1</div>
<div class="t" style="left:2295.4px;width:30px;text-align:center;top:1215px;font-size:15px;color:#b9bdc6">2</div>
<div class="t" style="left:2335.4px;width:30px;text-align:center;top:1215px;font-size:15px;color:#b9bdc6">3</div>
<!-- panel 4 partial -->
<div class="a" style="left:128px;top:1293.5px;width:2368px;height:3.5px;background:#1e2129"></div>
<!-- scrollbar -->
<div class="a" style="left:2527px;top:191px;width:7px;height:373px;background:#2c3140;border-radius:4px"></div>
</body></html>
